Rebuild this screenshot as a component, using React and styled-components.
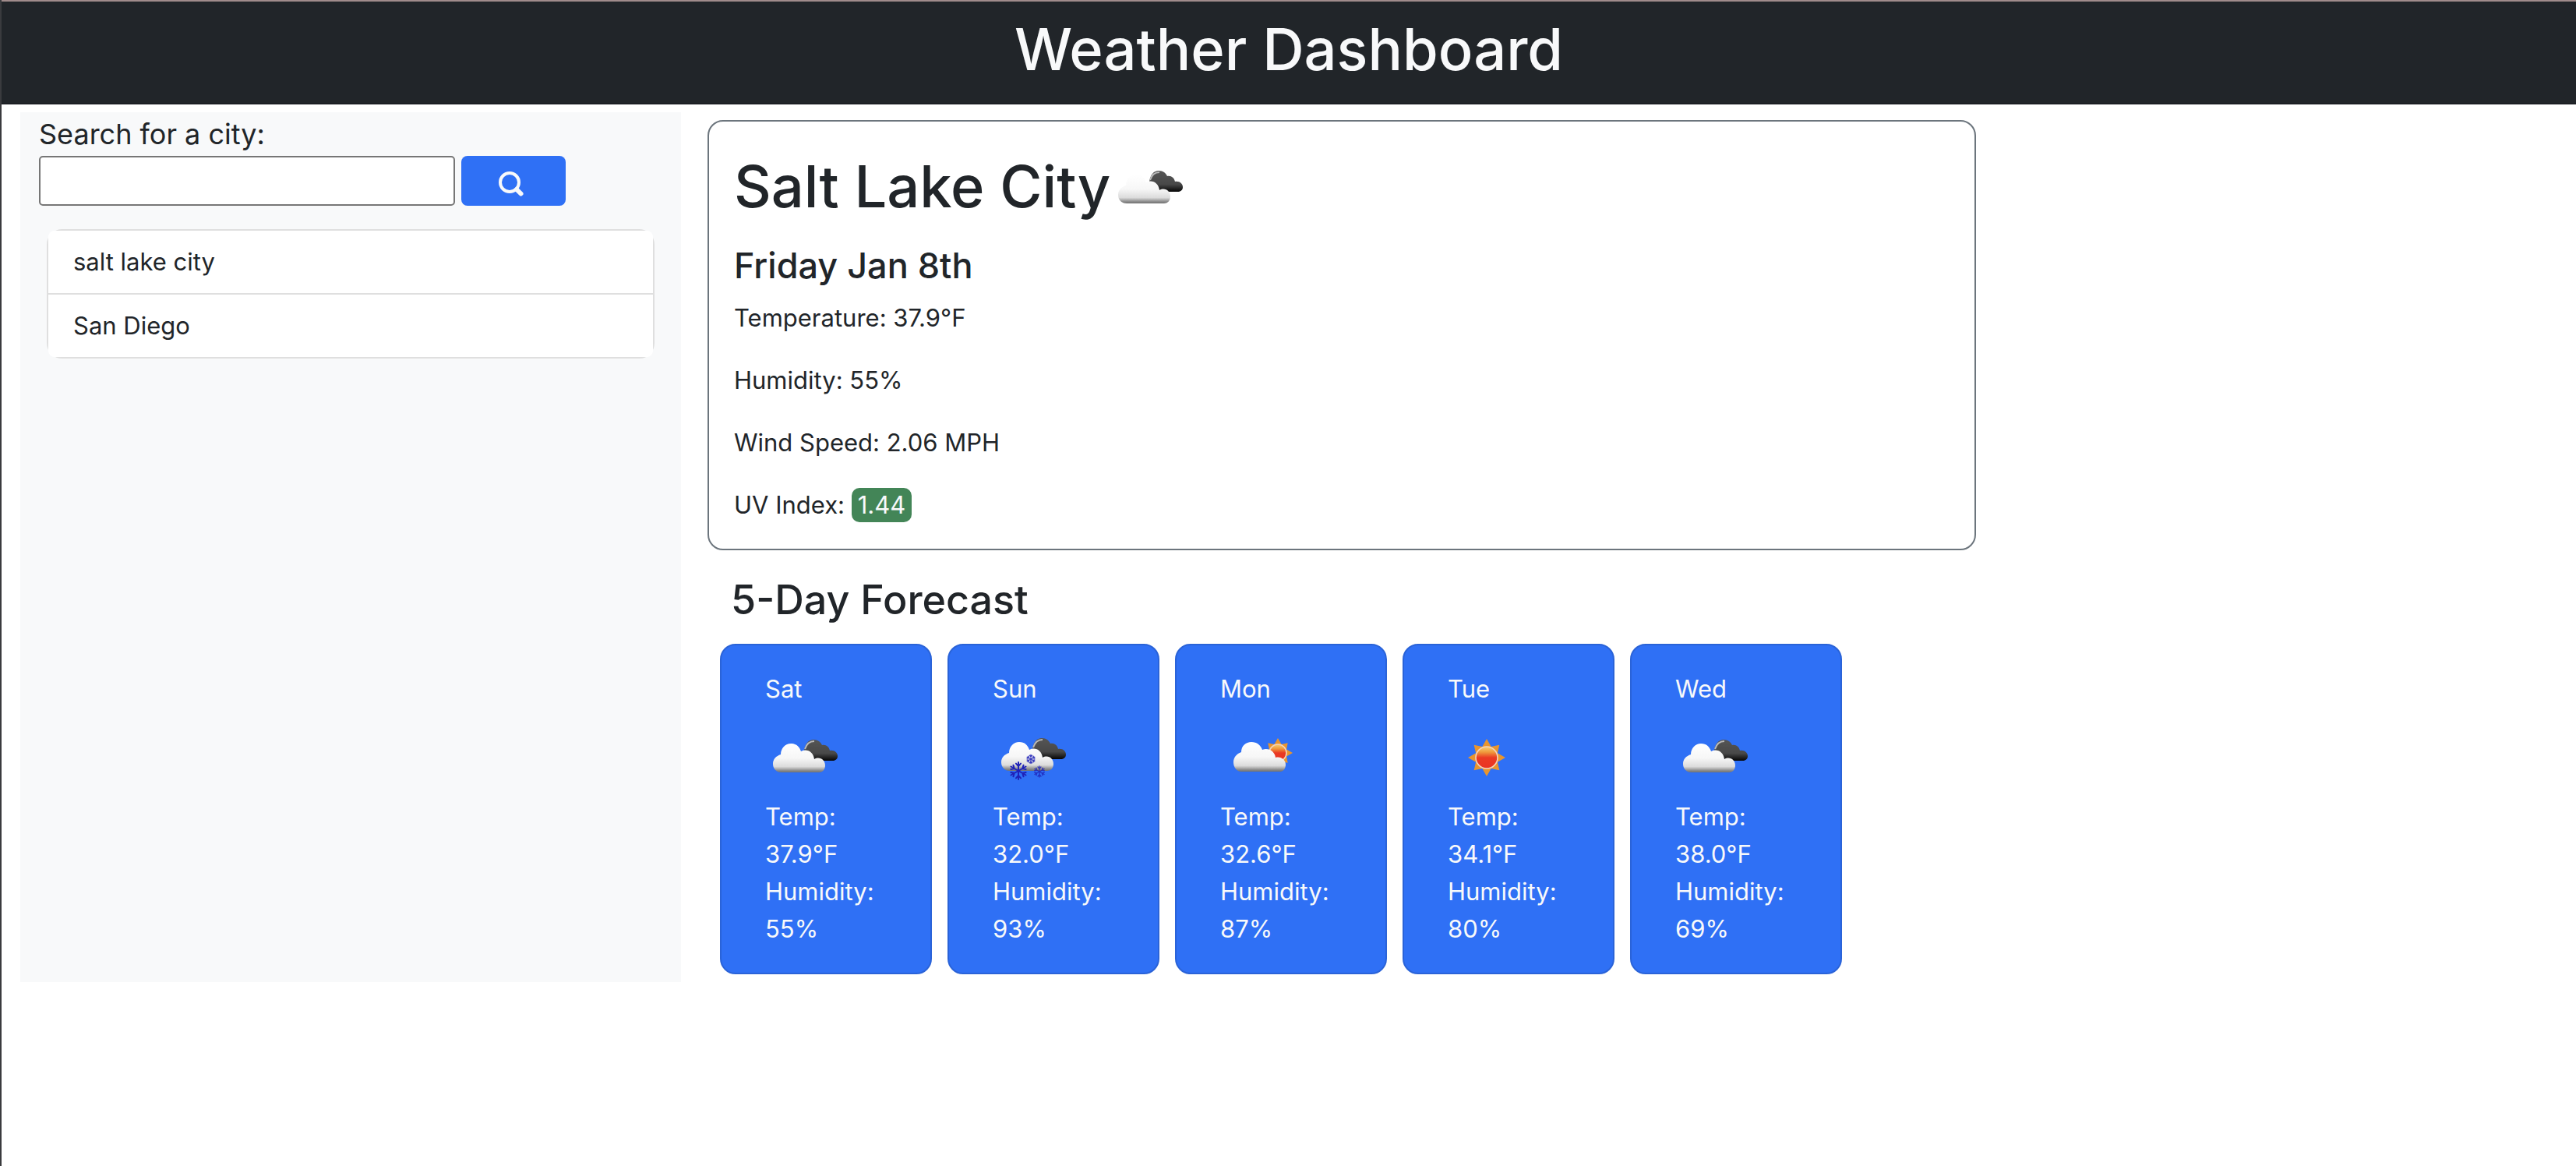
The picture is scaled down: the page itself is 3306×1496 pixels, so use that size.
import React, { useId } from "react";
import styled, { createGlobalStyle } from "styled-components";

const GlobalStyle = createGlobalStyle`
  *, *::before, *::after { box-sizing: border-box; }
  body {
    margin: 0;
    background: #fff;
    color: #212529;
    font-family: Inter, "Liberation Sans", sans-serif;
    font-size: 31px;
    line-height: 48px;
  }
  h1, h2, h3, p, ul { margin: 0; padding: 0; font-weight: 500; }
`;

const Page = styled.div`
  min-height: 100vh;
  border-left: 2px solid #3a3b3e;
`;

const Header = styled.header`
  border-top: 2px solid #a08b8b;
  border-bottom: 2px solid #1c1f24;
  padding: 12px 24px 20px;
  background: #212529;
  color: #f8f9fa;
  text-align: center;
`;

const PageTitle = styled.h1`
  font-size: 74px;
  line-height: 98px;
`;

const Content = styled.div`
  display: flex;
  align-items: flex-start;
  padding: 10px 24px;
`;

const Sidebar = styled.aside`
  flex: 0 0 calc(25% + 34px);
  align-self: stretch;
  padding: 0 24px;
  background: #f8f9fa;
`;

const SearchForm = styled.form`
  display: grid;
  grid-template-columns: minmax(0, 534px) 134px;
  column-gap: 8px;
`;

const SearchLabel = styled.label`
  grid-column: 1 / -1;
  font-size: 36px;
  line-height: 56px;
`;

const SearchInput = styled.input`
  height: 64px;
  padding: 2px 8px;
  border: 2px solid #767676;
  border-radius: 5px;
  background: #fff;
  font: inherit;
  color: inherit;
`;

const SearchButton = styled.button`
  display: flex;
  align-items: center;
  justify-content: center;
  height: 64px;
  padding: 8px 6px 0 0;
  border: 0;
  border-radius: 8px;
  background: #2f70f5;
  color: #f8f9fa;
  cursor: pointer;
`;

const HistoryCard = styled.div`
  margin: 30px 10px 0;
  border: 2px solid #dfdfdf;
  border-radius: 20px;
`;

const HistoryList = styled.ul`
  list-style: none;
  border-radius: 8px;
  background: #fff;
`;

const HistoryItem = styled.li`
  padding: 16px 32px;
  font-weight: 400;

  & + & { border-top: 2px solid #dfdfdf; }
`;

const Main = styled.main`
  flex: 0 0 50%;
  margin-left: 34px;
`;

const CurrentCard = styled.section`
  margin-top: 10px;
  padding: 32px;
  border: 2px solid #6c757d;
  border-radius: 20px;
`;

const CityName = styled.h2`
  display: flex;
  align-items: flex-start;
  height: 106px;
  margin-bottom: 16px;
  font-size: 74px;
  line-height: 102px;

  svg { align-self: flex-end; }
`;

const CurrentDate = styled.h3`
  margin-bottom: 12px;
  font-size: 45px;
  line-height: 62px;
`;

const Reading = styled.p`
  font-weight: 400;

  & + & { margin-top: 32px; }
`;

const UvBadge = styled.span`
  display: inline-block;
  padding: 0 8px;
  border-radius: 10px;
  background: #438557;
  color: #f8f9fa;
  line-height: 44px;
`;

const ForecastTitle = styled.h2`
  margin: 30px 30px 22px;
  font-size: 52px;
  line-height: 68px;
`;

const ForecastRow = styled.div`
  display: flex;
  gap: 20px;
  padding: 0 16px 10px;
`;

const DayCard = styled.article`
  width: 272px;
  padding: 32px 56px;
  border: 2px solid #2a63d8;
  border-radius: 20px;
  background: #2f70f5;
  color: #f8f9fa;
`;

const DayName = styled.h3`
  margin-bottom: 16px;
  font-size: 31px;
  font-weight: 400;
`;

const DayReading = styled.p`
  font-weight: 400;
`;

const WeatherSvg = styled.svg`
  display: block;
  flex: none;
  width: 100px;
  height: 100px;
`;

const cloudPath =
  "M21 67 C14 67 10 62 10 56 C10 50 14 46 20 44 C20 36 26 30 33 30 C40 30 44 34 46 40 C54 36 62 41 63 50 C70 46 77 51 77 58 C77 63 74 67 69 67 Z";

function BrokenClouds({ ids }) {
  return (
    <>
      <path
        d="M50 40 C51 30 56 25 62 25 C68 25 71 28 73 32 C78 31 82 34 83 39 C89 38 93 42 93 46 C93 50 90 52 86 52 L66 52 Z"
        fill={`url(#${ids}-dark)`}
      />
      <path d="M51 37 C53 31 57 27 63 27" fill="none" stroke="#b9b9b9" strokeWidth="2" />
      <path d={cloudPath} fill={`url(#${ids}-light)`} />
    </>
  );
}

function SunShape({ cx, cy, r, outer, ids }) {
  const points = Array.from({ length: 16 }, (_, i) => {
    const a = (i * Math.PI) / 8 - Math.PI / 2;
    const d = i % 2 ? r + 1 : i % 4 ? outer - 1 : outer;
    return `${(cx + Math.cos(a) * d).toFixed(1)},${(cy + Math.sin(a) * d).toFixed(1)}`;
  }).join(" ");
  return (
    <>
      <polygon points={points} fill="#e8952f" />
      <circle cx={cx} cy={cy} r={r} fill={`url(#${ids}-sun)`} stroke="#f3d3bd" strokeWidth="1.6" />
    </>
  );
}

function Snowflake({ cx, cy, r, opacity = 1 }) {
  return (
    <g stroke="#1f22b8" strokeWidth={r > 8 ? 2 : 1.4} strokeLinecap="round" opacity={opacity}>
      {[0, 60, 120, 180, 240, 300].map((a) => (
        <g key={a} transform={`translate(${cx} ${cy}) rotate(${a})`}>
          <path d={`M0 0 V${-r} M${-r * 0.28} ${-r * 0.85} L0 ${-r * 0.55} L${r * 0.28} ${-r * 0.85}`} fill="none" />
        </g>
      ))}
    </g>
  );
}

function WeatherIcon({ kind, label }) {
  const ids = useId().replace(/[^a-zA-Z0-9]/g, "");
  return (
    <WeatherSvg viewBox="0 0 100 100" role="img" aria-label={label}>
      <defs>
        <linearGradient id={`${ids}-light`} x1="0" y1="0" x2="0" y2="1">
          <stop offset="0" stopColor="#ffffff" />
          <stop offset="0.5" stopColor="#f7f7f7" />
          <stop offset="0.8" stopColor="#dcdcdc" />
          <stop offset="0.93" stopColor="#8f8f8f" />
          <stop offset="1" stopColor="#707070" />
        </linearGradient>
        <linearGradient id={`${ids}-dark`} x1="0" y1="0" x2="0" y2="1">
          <stop offset="0" stopColor="#555555" />
          <stop offset="0.65" stopColor="#484848" />
          <stop offset="1" stopColor="#050505" />
        </linearGradient>
        <linearGradient id={`${ids}-sun`} x1="0" y1="0" x2="0" y2="1">
          <stop offset="0" stopColor="#f6cf72" />
          <stop offset="0.25" stopColor="#ef9a3c" />
          <stop offset="0.5" stopColor="#ea3a24" />
          <stop offset="1" stopColor="#e93222" />
        </linearGradient>
      </defs>
      {kind === "clouds" && <BrokenClouds ids={ids} />}
      {kind === "snow" && (
        <>
          <g transform="translate(1 -2)">
            <BrokenClouds ids={ids} />
          </g>
          <Snowflake cx={33} cy={65} r={11} />
          <Snowflake cx={49} cy={50} r={5.5} opacity={0.85} />
          <Snowflake cx={60} cy={66} r={7} opacity={0.8} />
        </>
      )}
      {kind === "partly" && (
        <>
          <SunShape cx={74} cy={42} r={11} outer={19} ids={ids} />
          <path
            d="M27 66 C21 66 17 60 17 54 C17 48 21 43 27 41 C27 33 33 28 40 28 C47 28 52 32 54 38 C62 35 70 40 71 48 C78 46 84 51 84 57 C84 62 81 66 77 66 Z"
            fill={`url(#${ids}-light)`}
          />
        </>
      )}
      {kind === "sun" && <SunShape cx={50} cy={48} r={14} outer={24} ids={ids} />}
    </WeatherSvg>
  );
}

function SearchIcon() {
  return (
    <svg width="34" height="34" viewBox="0 0 34 34" aria-hidden="true">
      <circle cx="15" cy="15" r="12" fill="none" stroke="currentColor" strokeWidth="4" />
      <path d="M24 24 L29.5 29.5" stroke="currentColor" strokeWidth="6" strokeLinecap="round" />
    </svg>
  );
}

const cities = ["salt lake city", "San Diego"];

const forecast = [
  { day: "Sat", kind: "clouds", label: "Broken clouds", temp: "37.9", humidity: 55 },
  { day: "Sun", kind: "snow", label: "Snow", temp: "32.0", humidity: 93 },
  { day: "Mon", kind: "partly", label: "Few clouds", temp: "32.6", humidity: 87 },
  { day: "Tue", kind: "sun", label: "Clear sky", temp: "34.1", humidity: 80 },
  { day: "Wed", kind: "clouds", label: "Broken clouds", temp: "38.0", humidity: 69 },
];

export default function App() {
  return (
    <Page>
      <GlobalStyle />
      <Header>
        <PageTitle>Weather Dashboard</PageTitle>
      </Header>
      <Content>
        <Sidebar>
          <SearchForm onSubmit={(event) => event.preventDefault()}>
            <SearchLabel htmlFor="city">Search for a city:</SearchLabel>
            <SearchInput id="city" type="text" />
            <SearchButton type="submit" aria-label="Search">
              <SearchIcon />
            </SearchButton>
          </SearchForm>
          <HistoryCard>
            <HistoryList>
              {cities.map((city) => (
                <HistoryItem key={city}>{city}</HistoryItem>
              ))}
            </HistoryList>
          </HistoryCard>
        </Sidebar>
        <Main>
          <CurrentCard>
            <CityName>
              Salt Lake City
              <WeatherIcon kind="clouds" label="Broken clouds" />
            </CityName>
            <CurrentDate>Friday Jan 8th</CurrentDate>
            <Reading>Temperature: 37.9°F</Reading>
            <Reading>Humidity: 55%</Reading>
            <Reading>Wind Speed: 2.06 MPH</Reading>
            <Reading>
              UV Index: <UvBadge>1.44</UvBadge>
            </Reading>
          </CurrentCard>
          <ForecastTitle>5-Day Forecast</ForecastTitle>
          <ForecastRow>
            {forecast.map((item) => (
              <DayCard key={item.day}>
                <DayName>{item.day}</DayName>
                <WeatherIcon kind={item.kind} label={item.label} />
                <DayReading>Temp: {item.temp}°F</DayReading>
                <DayReading>Humidity: {item.humidity}%</DayReading>
              </DayCard>
            ))}
          </ForecastRow>
        </Main>
      </Content>
    </Page>
  );
}
